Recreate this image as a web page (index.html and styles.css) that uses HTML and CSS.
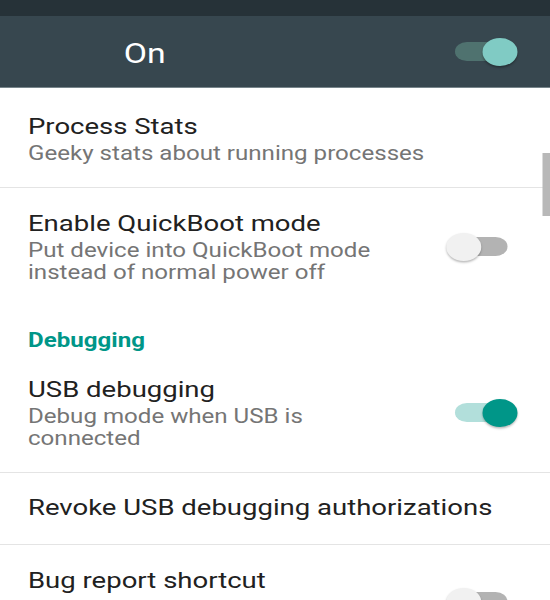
FILE: index.html
```html
<!DOCTYPE html>
<html>
<head>
<meta charset="utf-8">
<link rel="stylesheet" href="styles.css">
</head>
<body>
<div class="screen">
  <div class="statusbar"></div>
  <div class="switchbar">
    <span class="switchbar-label">On</span>
    <span class="switch switch-dark is-on"><span class="track"></span><span class="thumb"></span></span>
  </div>
  <div class="list">
    <div class="pref has-divider">
      <div class="pref-text">
        <div class="title">Process Stats</div>
        <div class="summary">Geeky stats about running processes</div>
      </div>
    </div>
    <div class="pref">
      <div class="pref-text">
        <div class="title">Enable QuickBoot mode</div>
        <div class="summary">Put device into QuickBoot mode instead of normal power off</div>
      </div>
      <span class="switch is-off"><span class="track"></span><span class="thumb"></span></span>
    </div>
    <div class="category">Debugging</div>
    <div class="pref has-divider">
      <div class="pref-text">
        <div class="title">USB debugging</div>
        <div class="summary">Debug mode when USB is connected</div>
      </div>
      <span class="switch is-on"><span class="track"></span><span class="thumb"></span></span>
    </div>
    <div class="pref pref-single has-divider">
      <div class="pref-text">
        <div class="title">Revoke USB debugging authorizations</div>
      </div>
    </div>
    <div class="pref pref-last">
      <div class="pref-text">
        <div class="title">Bug report shortcut</div>
      </div>
      <span class="switch is-off"><span class="track"></span><span class="thumb"></span></span>
    </div>
  </div>
  <div class="scrollbar"></div>
</div>
</body>
</html>
```
FILE: styles.css
```css
html, body {
  margin: 0;
  padding: 0;
  background: #ffffff;
  overflow: hidden;
}

.screen {
  position: relative;
  width: 440px;
  height: 600px;
  overflow: hidden;
  transform: scaleX(1.25);
  transform-origin: 0 0;
  font-family: Roboto, "Noto Sans", sans-serif;
  background: #ffffff;
}

.statusbar {
  height: 16px;
  background: #263238;
}

.switchbar {
  height: 72px;
  display: flex;
  align-items: center;
  justify-content: space-between;
  padding: 0 26.4px 0 99px;
  box-sizing: border-box;
  background: #37474f;
  border-bottom: 1px solid #77858b;
}

.switchbar-label {
  padding-top: 4px;
  font-size: 27px;
  line-height: 32px;
  color: #ffffff;
}

.list {
  padding-top: 2.5px;
}

.pref {
  display: flex;
  align-items: center;
  gap: 56px;
  padding: 22px 26.4px 22px 22.4px;
}

.pref-single {
  padding-top: 21.5px;
  padding-bottom: 21.5px;
}

.pref-last {
  align-items: flex-start;
}

.pref-last .switch {
  margin-top: 21px;
}

.has-divider {
  border-bottom: 1px solid #e4e4e4;
}

.pref-text {
  flex: 1;
  min-width: 0;
}

.title {
  font-size: 22px;
  line-height: 28px;
  color: #212121;
}

.summary {
  margin-top: 2px;
  font-size: 19.3px;
  line-height: 22px;
  color: #757575;
}

.category {
  padding: 24px 22.4px 2px;
  font-size: 19.3px;
  line-height: 22px;
  font-weight: 700;
  color: #009688;
}

.switch {
  position: relative;
  flex: none;
  width: 56.8px;
  height: 28px;
  display: flex;
  align-items: center;
}

.track {
  margin-left: 7.2px;
  width: 42.4px;
  height: 19px;
  border-radius: 9.5px;
  background: #b3b3b3;
}

.thumb {
  position: absolute;
  top: 0;
  left: 0;
  width: 28px;
  height: 28px;
  border-radius: 50%;
  background: #f1f1f1;
  box-shadow: 0 1.5px 2px rgba(0, 0, 0, 0.28);
}

.is-on .thumb {
  left: auto;
  right: 0;
  background: #009688;
}

.is-on .track {
  background: #b2dfdb;
}

.switch-dark .track {
  background: #4f726f;
}

.switch-dark .thumb {
  background: #80cbc4;
  box-shadow: 0 1.5px 2px rgba(0, 0, 0, 0.35);
}

.scrollbar {
  position: absolute;
  top: 153px;
  right: 0;
  width: 5.6px;
  height: 63px;
  background: #b8b8b8;
}
```
